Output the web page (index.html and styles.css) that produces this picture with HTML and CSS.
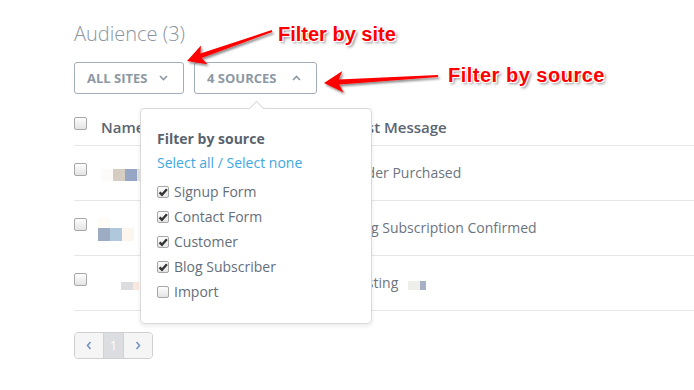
FILE: index.html
```html
<!DOCTYPE html>
<html lang="en">
<head>
  <meta charset="UTF-8" />
  <meta name="viewport" content="width=device-width, initial-scale=1.0"/>
  <title>Audience</title>
  <link rel="stylesheet" href="styles.css">
</head>
<body>
  <div class="page">
    <h1 class="title">Audience (3)</h1>

    <div class="filters">
      <button class="filter-btn filter-btn-sites">
        ALL SITES
        <svg width="9" height="6" viewBox="0 0 9 6"><path d="M1 1l3.5 3.5L8 1" /></svg>
      </button>
      <div class="filter-wrap">
        <button class="filter-btn filter-btn-open">
          4 SOURCES
          <svg width="9" height="6" viewBox="0 0 9 6"><path d="M1 5l3.5-3.5L8 5" /></svg>
        </button>

        <!-- Source filter dropdown -->
        <div class="popover">
          <div class="popover-title">Filter by source</div>
          <div class="popover-links"><a href="#">Select all</a> / <a href="#">Select none</a></div>
          <ul class="source-list">
            <li><span class="check is-on"></span>Signup Form</li>
            <li><span class="check is-on"></span>Contact Form</li>
            <li><span class="check is-on"></span>Customer</li>
            <li><span class="check is-on"></span>Blog Subscriber</li>
            <li><span class="check"></span>Import</li>
          </ul>
        </div>
      </div>
    </div>

    <div class="audience">
      <div class="row row-head">
        <span class="check"></span>
        <div class="cell">Name</div>
        <div class="cell">Last Message</div>
      </div>
      <div class="row">
        <span class="check"></span>
        <div class="cell">
          <div class="blur blur-one">
            <i class="px" style="background:#fcfbf9"></i><i class="px" style="background:#d6cdc2"></i><i class="px" style="background:#96a6c4"></i><i class="px px-thin" style="background:#e3e3e3"></i>
          </div>
        </div>
        <div class="cell">Order Purchased</div>
      </div>
      <div class="row">
        <span class="check"></span>
        <div class="cell">
          <div class="blur blur-two">
            <div class="blur-line"><i class="px" style="background:#fffcf8"></i></div>
            <div class="blur-line"><i class="px" style="background:#9eacc3"></i><i class="px" style="background:#b0c8dc"></i><i class="px" style="background:#fdf6ef"></i></div>
          </div>
        </div>
        <div class="cell">Blog Subscription Confirmed</div>
      </div>
      <div class="row">
        <span class="check"></span>
        <div class="cell">
          <div class="blur blur-three">
            <i class="px" style="background:#dcdcdf"></i><i class="px px-half" style="background:#f8e8df"></i>
          </div>
        </div>
        <div class="cell">Posting <span class="blur blur-msg"><i class="px" style="background:#eeeeea"></i><i class="px px-half" style="background:#a6b0c6"></i></span></div>
      </div>
    </div>

    <div class="pager">
      <span class="pager-btn">
        <svg width="6" height="9" viewBox="0 0 6 9"><path d="M4.5 1L1.5 4.5l3 3.5" /></svg>
      </span>
      <span class="pager-btn pager-current">1</span>
      <span class="pager-btn">
        <svg width="6" height="9" viewBox="0 0 6 9"><path d="M1.5 1l3 3.5-3 3.5" /></svg>
      </span>
    </div>
  </div>

  <!-- Annotations drawn over the screenshot -->
  <svg class="annotations" width="694" height="390" viewBox="0 0 694 390">
    <defs>
      <filter id="shade" x="-10%" y="-30%" width="130%" height="180%">
        <feDropShadow dx="1.5" dy="2" stdDeviation="1.2" flood-color="#000" flood-opacity="0.45" />
      </filter>
    </defs>
    <polygon filter="url(#shade)" fill="#ff0000"
      points="271.7,30.1 200.4,53.6 201,45.5 187,61 207.5,64.3 201.6,58 272.3,31.9" />
    <polygon filter="url(#shade)" fill="#ff0000"
      points="437.9,75 338.8,79.4 342.4,71 324,83 343.6,92.6 339.2,84.6 438.1,77" />
  </svg>
  <div class="note note-site">Filter by site</div>
  <div class="note note-source">Filter by source</div>
</body>
</html>
```

FILE: styles.css
```css
body, html {
  margin: 0;
  padding: 0;
  background: #fff;
  font-family: "Open Sans", sans-serif;
  color: #5b6571;
}

.page {
  position: relative;
  padding: 20px 0 0 74px;
  width: 620px;
  height: 370px;
  overflow: hidden;
}

.title {
  margin: 0;
  font-size: 20px;
  font-weight: 300;
  line-height: 28px;
  color: #8a949f;
}

.filters {
  display: flex;
  gap: 10px;
  margin-top: 14px;
}

.filter-wrap {
  position: relative;
}

.filter-btn {
  display: flex;
  align-items: center;
  justify-content: space-between;
  box-sizing: border-box;
  height: 32px;
  padding: 0 15px 0 12px;
  background: #fff;
  border: 1px solid #a3adb8;
  border-radius: 3px;
  font-family: "Open Sans", sans-serif;
  font-size: 13px;
  font-weight: 700;
  color: #8d98a4;
  cursor: pointer;
}

.filter-btn svg path {
  fill: none;
  stroke: #8d98a4;
  stroke-width: 1.6;
}

.filter-btn-sites {
  width: 110px;
}

.filter-btn-open {
  width: 123px;
}

.popover {
  position: absolute;
  top: 46px;
  left: -54px;
  z-index: 5;
  width: 214px;
  height: 175px;
  padding: 20px 0 19px 16px;
  background: #fff;
  border: 1px solid #dadada;
  border-radius: 4px;
  box-shadow: 0 2px 4px rgba(0, 0, 0, 0.08);
}

.popover::before {
  content: "";
  position: absolute;
  top: -6px;
  left: 110px;
  width: 10px;
  height: 10px;
  background: #fff;
  border-top: 1px solid #dadada;
  border-left: 1px solid #dadada;
  transform: rotate(45deg);
}

.popover-title {
  font-size: 14px;
  font-weight: 700;
  line-height: 20px;
  color: #59636f;
}

.popover-links {
  margin-top: 4px;
  font-size: 14px;
  line-height: 20px;
  color: #3ea8e0;
}

.popover-links a {
  color: #3ea8e0;
  text-decoration: none;
}

.source-list {
  list-style: none;
  margin: 6px 0 0;
  padding: 0;
}

.source-list li {
  display: flex;
  align-items: center;
  gap: 5px;
  height: 25px;
  font-size: 14px;
  color: #646e7a;
}

.check {
  display: inline-block;
  flex-shrink: 0;
  box-sizing: border-box;
  width: 13px;
  height: 13px;
  border: 1px solid #a7a7a7;
  border-radius: 2px;
  background: linear-gradient(#fdfdfd, #e4e4e4);
}

.check.is-on {
  background-image: url("data:image/svg+xml,%3Csvg xmlns='http://www.w3.org/2000/svg' width='11' height='11' viewBox='0 0 11 11'%3E%3Cpath d='M2 5.6l2.3 2.4L9 2.6' fill='none' stroke='%23333' stroke-width='2.2'/%3E%3C/svg%3E"), linear-gradient(#fdfdfd, #e4e4e4);
  background-repeat: no-repeat;
  background-position: center;
}

.source-list .check {
  width: 12px;
  height: 12px;
}

.audience {
  margin-top: 11px;
  width: 620px;
}

.row {
  display: grid;
  grid-template-columns: 27px 249px 1fr;
  align-items: start;
  box-sizing: border-box;
  height: 55px;
  padding-top: 17px;
  border-bottom: 1px solid #e6e6e6;
  font-size: 14px;
  line-height: 20px;
  color: #6b7480;
}

.row-head {
  height: 41px;
  padding-top: 12px;
  font-size: 15px;
  font-weight: 600;
  color: #5b6571;
}

.blur {
  display: flex;
}

.blur-line {
  display: flex;
}

.px {
  display: block;
  width: 12px;
  height: 12px;
}

.px-thin {
  width: 3px;
}

.px-half {
  width: 6px;
}

.blur-one {
  margin-top: 6px;
}

.blur-two {
  flex-direction: column;
  margin: -1px 0 0 -3px;
}

.blur-two .px {
  height: 11px;
}

.blur-two .blur-line + .blur-line .px {
  height: 13px;
}

.blur-three {
  margin: 9px 0 0 20px;
}

.blur-three .px {
  height: 8px;
}

.blur-msg {
  display: inline-flex;
  margin-left: 6px;
  vertical-align: -2px;
}

.blur-msg .px {
  height: 9px;
}

.pager {
  display: inline-flex;
  margin-top: 21px;
  border: 1px solid #cfcfcf;
  border-radius: 4px;
  overflow: hidden;
}

.pager-btn {
  display: flex;
  align-items: center;
  justify-content: center;
  width: 28px;
  height: 25px;
  background: #f5f5f5;
  font-size: 12px;
  color: #fff;
}

.pager-btn svg path {
  fill: none;
  stroke: #7294c0;
  stroke-width: 1.6;
}

.pager-current {
  width: 19px;
  background: #dcdde1;
  border-left: 1px solid #d2d2d2;
  border-right: 1px solid #d2d2d2;
}

.annotations {
  position: absolute;
  top: 0;
  left: 0;
  z-index: 10;
  pointer-events: none;
}

.note {
  position: absolute;
  z-index: 11;
  font-family: "Liberation Sans", Arial, sans-serif;
  font-size: 20px;
  font-weight: 700;
  line-height: 24px;
  color: #ff0000;
  white-space: nowrap;
  text-shadow: -1px -1px 0 #fff, 1px -1px 0 #fff, -1px 1px 0 #fff, 1px 1px 0 #fff,
    2px 2px 3px rgba(0, 0, 0, 0.5);
}

.note-site {
  top: 22px;
  left: 278px;
}

.note-source {
  top: 63px;
  left: 448px;
  letter-spacing: 0.5px;
}
```
